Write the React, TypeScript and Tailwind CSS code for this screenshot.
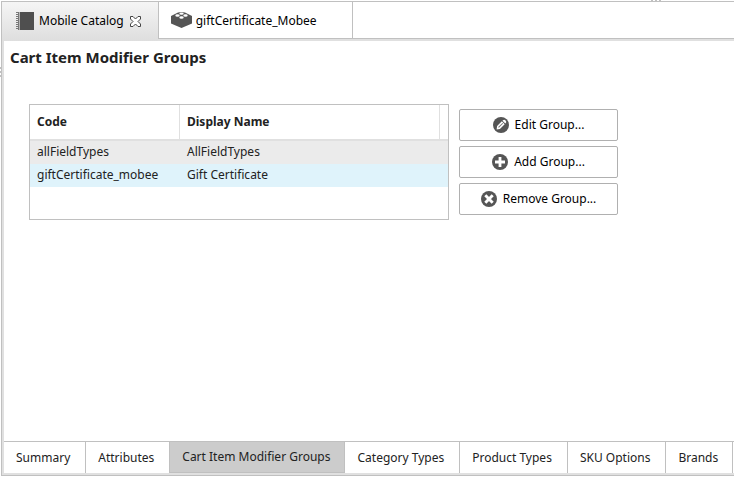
import React, { useState } from "react";

function CatalogIcon() {
  return (
    <svg width="18" height="18" viewBox="0 0 18 18" aria-hidden="true">
      <path d="M4 0h14v18H4z" fill="#4f4f4f" />
      <path d="M1 0v18" stroke="#777" strokeWidth="2" strokeDasharray="1 1" />
      <path d="M2.500 0v18" stroke="#777" strokeWidth="1" />
      <path d="M3.500 0v18" stroke="#b5b5b5" strokeWidth="1" />
    </svg>
  );
}

function BrickIcon() {
  return (
    <svg width="21" height="18" viewBox="0 0 21 18" aria-hidden="true">
      <path d="M0 4 7 .500Q10.500-.500 14 .500L21 4v7.500L10.500 16 0 11.500z" fill="#555" />
      <g fill="#fff">
        <ellipse cx="10.500" cy="1.700" rx="2.200" ry="1.100" />
        <ellipse cx="6.500" cy="3.500" rx="2.200" ry="1.200" />
        <ellipse cx="14.500" cy="3.500" rx="2.200" ry="1.200" />
        <ellipse cx="10.500" cy="5.500" rx="2.200" ry="1.200" />
      </g>
    </svg>
  );
}

function CloseIcon() {
  return (
    <svg width="11" height="11" viewBox="0 0 11 11" aria-hidden="true">
      <path
        d="M.5.500h2.500l2.500 2.500L8 .500h2.500V3L8 5.500 10.500 8v2.500H8L5.500 8 3 10.500H.500V8L3 5.500.500 3z"
        fill="#fff"
        stroke="#444"
      />
    </svg>
  );
}

function RoundIcon({ children }: { children: React.ReactNode }) {
  return (
    <svg width="16" height="16" viewBox="0 0 16 16" aria-hidden="true">
      <circle cx="8" cy="8" r="8" fill="#555" />
      {children}
    </svg>
  );
}

const actions = [
  {
    label: "Edit Group...",
    icon: (
      <RoundIcon>
        <g transform="rotate(45 8 8)">
          <path d="M6 3.300a2 1.800 0 0 1 4 0v.600H6zM6 4.800h4v6.700L8 14.200l-2-2.700z" fill="#fff" />
          <path d="M8 5.500v6" stroke="#777" strokeWidth="1" />
        </g>
      </RoundIcon>
    ),
  },
  {
    label: "Add Group...",
    icon: (
      <RoundIcon>
        <path d="M8 3v10M3 8h10" stroke="#fff" strokeWidth="2.800" />
      </RoundIcon>
    ),
  },
  {
    label: "Remove Group...",
    icon: (
      <RoundIcon>
        <path d="M4.300 4.300l7.400 7.400M11.700 4.300l-7.400 7.400" stroke="#fff" strokeWidth="2.900" />
      </RoundIcon>
    ),
  },
];

const groups = [
  { code: "allFieldTypes", name: "AllFieldTypes" },
  { code: "giftCertificate_mobee", name: "Gift Certificate" },
];

const pages = [
  "Summary",
  "Attributes",
  "Cart Item Modifier Groups",
  "Category Types",
  "Product Types",
  "SKU Options",
  "Brands",
];

export default function App() {
  const [page, setPage] = useState("Cart Item Modifier Groups");
  const [selected, setSelected] = useState("giftCertificate_mobee");

  return (
    <div className="relative flex h-screen flex-col overflow-hidden bg-white pt-px pb-0.5 pl-px font-['Noto_Sans',sans-serif] text-xs text-[#222]">
      <div className="absolute top-0 left-[651px] flex gap-0.5">
        <i className="h-px w-0.5 bg-[#c0c0c0]" />
        <i className="h-px w-0.5 bg-[#c0c0c0]" />
        <i className="h-px w-0.5 bg-[#c0c0c0]" />
      </div>
      <div className="absolute top-[67px] left-0 flex flex-col gap-0.5">
        <i className="h-0.5 w-px bg-[#c0c0c0]" />
        <i className="h-0.5 w-px bg-[#c0c0c0]" />
        <i className="h-0.5 w-px bg-[#c0c0c0]" />
      </div>

      <div className="flex min-h-0 flex-1 flex-col border-y border-l border-[#c0c0c0]">
        <div className="flex h-[39px] shrink-0 bg-[#e0e0e0] text-black">
          <div className="flex items-center bg-linear-to-b from-[#f5f5f5] to-[#dedede] pr-[17px] pb-px pl-3.5">
            <button type="button" className="flex items-center gap-[5px]">
              <CatalogIcon />
              Mobile Catalog
            </button>
            <button type="button" aria-label="Close Mobile Catalog" className="ml-1.5">
              <CloseIcon />
            </button>
          </div>
          <button
            type="button"
            className="mb-0.5 flex items-center gap-1 border-x border-b border-[#c0c0c0] bg-white pt-0.5 pr-[35px] pl-3"
          >
            <BrickIcon />
            giftCertificate_Mobee
          </button>
          <div className="mb-0.5 flex-1 border-b border-[#c0c0c0] bg-white" />
        </div>

        <main className="flex min-h-0 flex-1 flex-col border-b-2 border-l-2 border-[#e0e0e0]">
          <h1 className="px-1.5 pt-[5px] text-[15px] leading-[22px] font-bold">Cart Item Modifier Groups</h1>

          <div className="flex flex-1 items-start gap-2.5 pt-9 pl-[25px]">
            <div className="h-[116px] w-[420px] border border-[#c0c0c0]">
              <table className="w-full table-fixed border-separate border-spacing-0 text-left">
                <colgroup>
                  <col className="w-[150px]" />
                  <col className="w-[260px]" />
                  <col />
                </colgroup>
                <thead>
                  <tr className="h-9">
                    <th className="border-r border-b-2 border-[#e0e0e0] px-[7px] font-bold">Code</th>
                    <th className="border-r border-b-2 border-[#e0e0e0] px-[7px] font-bold">Display Name</th>
                    <td className="border-b-2 border-[#e0e0e0]" />
                  </tr>
                </thead>
                <tbody>
                  {groups.map((g) => (
                    <tr
                      key={g.code}
                      onClick={() => setSelected(g.code)}
                      className={selected === g.code ? "h-[23px] bg-[#dff3fb]" : "h-[23px] bg-[#ebebeb]"}
                    >
                      <td className="px-[7px] pb-0.5">{g.code}</td>
                      <td className="px-[7px] pb-0.5">{g.name}</td>
                      <td />
                    </tr>
                  ))}
                </tbody>
              </table>
            </div>

            <div className="flex w-[159px] flex-col gap-[5px] pt-[5px]">
              {actions.map((a) => (
                <button
                  key={a.label}
                  type="button"
                  className="flex h-8 items-center justify-center gap-1.5 rounded-xs border border-[#b0b0b0] bg-white text-black"
                >
                  {a.icon}
                  {a.label}
                </button>
              ))}
            </div>
          </div>

          <nav className="flex h-8 shrink-0 border-t border-[#c0c0c0]">
            {pages.map((p) => (
              <button
                key={p}
                type="button"
                onClick={() => setPage(p)}
                className={
                  page === p
                    ? "shrink-0 border-r border-b border-[#c0c0c0] bg-[#cccccc] pr-3.5 pl-3 whitespace-nowrap"
                    : "shrink-0 border-r border-[#c0c0c0] pr-[15px] pl-3 whitespace-nowrap last:pr-3.5"
                }
              >
                {p}
              </button>
            ))}
          </nav>
        </main>
      </div>
    </div>
  );
}
